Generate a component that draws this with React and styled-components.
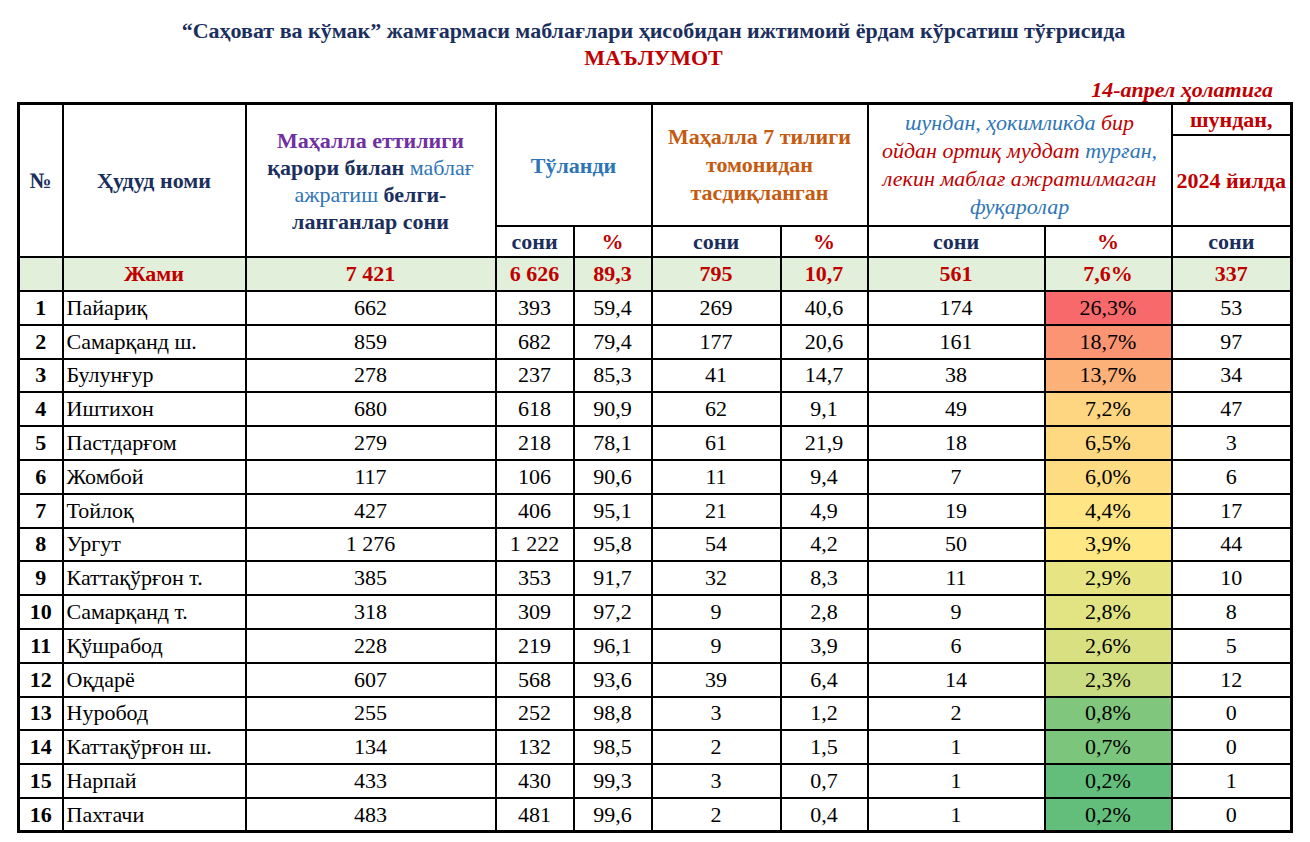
import React from 'react';
import styled, { createGlobalStyle } from 'styled-components';

const SERIF = '"Liberation Serif", "Times New Roman", serif';

const GlobalStyle = createGlobalStyle`
  body {
    margin: 0;
    background: #ffffff;
    font-family: ${SERIF};
  }
`;

const NAVY = '#1b2f5e';
const RED = '#c00000';
const BLUE = '#2e75b6';

const Page = styled.div`
  width: 1310px;
  height: 842px;
  box-sizing: border-box;
  padding: 17px 0 0 17px;
  overflow: hidden;
  font-family: ${SERIF};
`;

const Heading = styled.div`
  width: 1273px;
  text-align: center;
  font-weight: bold;
  font-size: 22px;
  line-height: 27px;
  color: ${NAVY};
`;

const Subtitle = styled.div`
  color: ${RED};
`;

const DateLine = styled.div`
  width: 1256px;
  text-align: right;
  font-style: italic;
  font-weight: bold;
  font-size: 22px;
  line-height: 24px;
  margin-top: 7px;
  color: ${RED};
`;

const Table = styled.table`
  border-collapse: collapse;
  table-layout: fixed;
  width: 1273px;
  border: 3px solid #000;
  font-family: ${SERIF};
  font-size: 22px;
  color: #000;
`;

const Th = styled.th`
  border: 2px solid #000;
  padding: 0;
  text-align: center;
  vertical-align: middle;
  font-weight: bold;
  font-size: 22px;
  line-height: ${p => p.$lh || 27}px;
  color: ${p => p.$color || NAVY};
  height: ${p => p.$h ? `${p.$h}px` : 'auto'};
  white-space: nowrap;
`;

const Part = styled.span`
  color: ${p => p.$color};
  font-weight: ${p => (p.$light ? 'normal' : 'bold')};
  font-style: ${p => (p.$italic ? 'italic' : 'normal')};
`;

const TotalRow = styled.tr`
  background: #e2efda;
  height: 34px;
`;

const TotalCell = styled.td`
  border: 2px solid #000;
  padding: 0;
  text-align: center;
  font-weight: bold;
  line-height: 28px;
  color: ${RED};
`;

const Row = styled.tr`
  height: 33.8px;
`;

const Cell = styled.td`
  border: 2px solid #000;
  padding: ${p => (p.$left ? '0 0 0 3px' : '0')};
  text-align: ${p => (p.$left ? 'left' : 'center')};
  font-weight: ${p => (p.$bold ? 'bold' : 'normal')};
  line-height: 28px;
  background: ${p => p.$bg || 'transparent'};
  white-space: nowrap;
`;

const widths = [44, 183, 250, 78, 78, 129, 87, 177, 127, 120];

const rows = [
  ['Пайариқ', '662', '393', '59,4', '269', '40,6', '174', 26.3, '53'],
  ['Самарқанд ш.', '859', '682', '79,4', '177', '20,6', '161', 18.7, '97'],
  ['Булунғур', '278', '237', '85,3', '41', '14,7', '38', 13.7, '34'],
  ['Иштихон', '680', '618', '90,9', '62', '9,1', '49', 7.2, '47'],
  ['Пастдарғом', '279', '218', '78,1', '61', '21,9', '18', 6.5, '3'],
  ['Жомбой', '117', '106', '90,6', '11', '9,4', '7', 6.0, '6'],
  ['Тойлоқ', '427', '406', '95,1', '21', '4,9', '19', 4.4, '17'],
  ['Ургут', '1 276', '1 222', '95,8', '54', '4,2', '50', 3.9, '44'],
  ['Каттақўрғон т.', '385', '353', '91,7', '32', '8,3', '11', 2.9, '10'],
  ['Самарқанд т.', '318', '309', '97,2', '9', '2,8', '9', 2.8, '8'],
  ['Қўшрабод', '228', '219', '96,1', '9', '3,9', '6', 2.6, '5'],
  ['Оқдарё', '607', '568', '93,6', '39', '6,4', '14', 2.3, '12'],
  ['Нуробод', '255', '252', '98,8', '3', '1,2', '2', 0.8, '0'],
  ['Каттақўрғон ш.', '134', '132', '98,5', '2', '1,5', '1', 0.7, '0'],
  ['Нарпай', '433', '430', '99,3', '3', '0,7', '1', 0.2, '1'],
  ['Пахтачи', '483', '481', '99,6', '2', '0,4', '1', 0.2, '0'],
];

// three-colour scale: green (min) -> yellow (median) -> red (max)
const GREEN = [99, 190, 123];
const YELLOW = [255, 235, 132];
const REDC = [248, 105, 107];
const MIN = 0.2;
const MID = 3.4;
const MAX = 26.3;

const mix = (a, b, t) => a.map((v, i) => Math.round(v + (b[i] - v) * t));

const scaleColor = (v) => {
  const c = v <= MID
    ? mix(GREEN, YELLOW, (v - MIN) / (MID - MIN))
    : mix(YELLOW, REDC, (v - MID) / (MAX - MID));
  return `rgb(${c[0]}, ${c[1]}, ${c[2]})`;
};

const fmtPct = (v) => `${v.toFixed(1).replace('.', ',')}%`;

const App = () => (
  <>
    <GlobalStyle />
    <Page>
      <Heading>
        “Саҳоват ва кўмак” жамғармаси маблағлари ҳисобидан ижтимоий ёрдам кўрсатиш тўғрисида
        <Subtitle>МАЪЛУМОТ</Subtitle>
      </Heading>
      <DateLine>14-апрел ҳолатига</DateLine>
      <Table>
        <colgroup>
          {widths.map((w, i) => <col key={i} style={{ width: w }} />)}
        </colgroup>
        <thead>
          <tr>
            <Th rowSpan={3}>№</Th>
            <Th rowSpan={3}>Ҳудуд номи</Th>
            <Th rowSpan={3}>
              <Part $color="#7030a0">Маҳалла еттилиги</Part><br />
              <Part $color={NAVY}>қарори билан </Part>
              <Part $color={BLUE} $light>маблағ</Part><br />
              <Part $color={BLUE} $light>ажратиш </Part>
              <Part $color={NAVY}>белги-</Part><br />
              <Part $color={NAVY}>ланганлар сони</Part>
            </Th>
            <Th colSpan={2} rowSpan={2} $color={BLUE}>Тўланди</Th>
            <Th colSpan={2} rowSpan={2} $color="#c55a11" $lh={28}>
              Маҳалла 7 тилиги<br />томонидан<br />тасдиқланган
            </Th>
            <Th colSpan={2} rowSpan={2} $lh={28}>
              <Part $color={BLUE} $light $italic>шундан, ҳокимликда </Part>
              <Part $color={RED} $light $italic> бир</Part><br />
              <Part $color={RED} $light $italic>ойдан ортиқ муддат </Part>
              <Part $color={BLUE} $light $italic> турған,</Part><br />
              <Part $color={RED} $light $italic>лекин маблағ ажратилмаган</Part><br />
              <Part $color={BLUE} $light $italic>фуқаролар</Part>
            </Th>
            <Th $color={RED} $h={29}>шундан,</Th>
          </tr>
          <tr>
            <Th $color={RED} $h={89}>2024 йилда</Th>
          </tr>
          <tr>
            <Th $h={29}>сони</Th>
            <Th $color={RED}>%</Th>
            <Th>сони</Th>
            <Th $color={RED}>%</Th>
            <Th>сони</Th>
            <Th $color={RED}>%</Th>
            <Th>сони</Th>
          </tr>
        </thead>
        <tbody>
          <TotalRow>
            <TotalCell />
            <TotalCell>Жами</TotalCell>
            <TotalCell>7 421</TotalCell>
            <TotalCell>6 626</TotalCell>
            <TotalCell>89,3</TotalCell>
            <TotalCell>795</TotalCell>
            <TotalCell>10,7</TotalCell>
            <TotalCell>561</TotalCell>
            <TotalCell>7,6%</TotalCell>
            <TotalCell>337</TotalCell>
          </TotalRow>
          {rows.map((r, i) => (
            <Row key={r[0]}>
              <Cell $bold>{i + 1}</Cell>
              <Cell $left>{r[0]}</Cell>
              <Cell>{r[1]}</Cell>
              <Cell>{r[2]}</Cell>
              <Cell>{r[3]}</Cell>
              <Cell>{r[4]}</Cell>
              <Cell>{r[5]}</Cell>
              <Cell>{r[6]}</Cell>
              <Cell $bg={scaleColor(r[7])}>{fmtPct(r[7])}</Cell>
              <Cell>{r[8]}</Cell>
            </Row>
          ))}
        </tbody>
      </Table>
    </Page>
  </>
);

export default App;
